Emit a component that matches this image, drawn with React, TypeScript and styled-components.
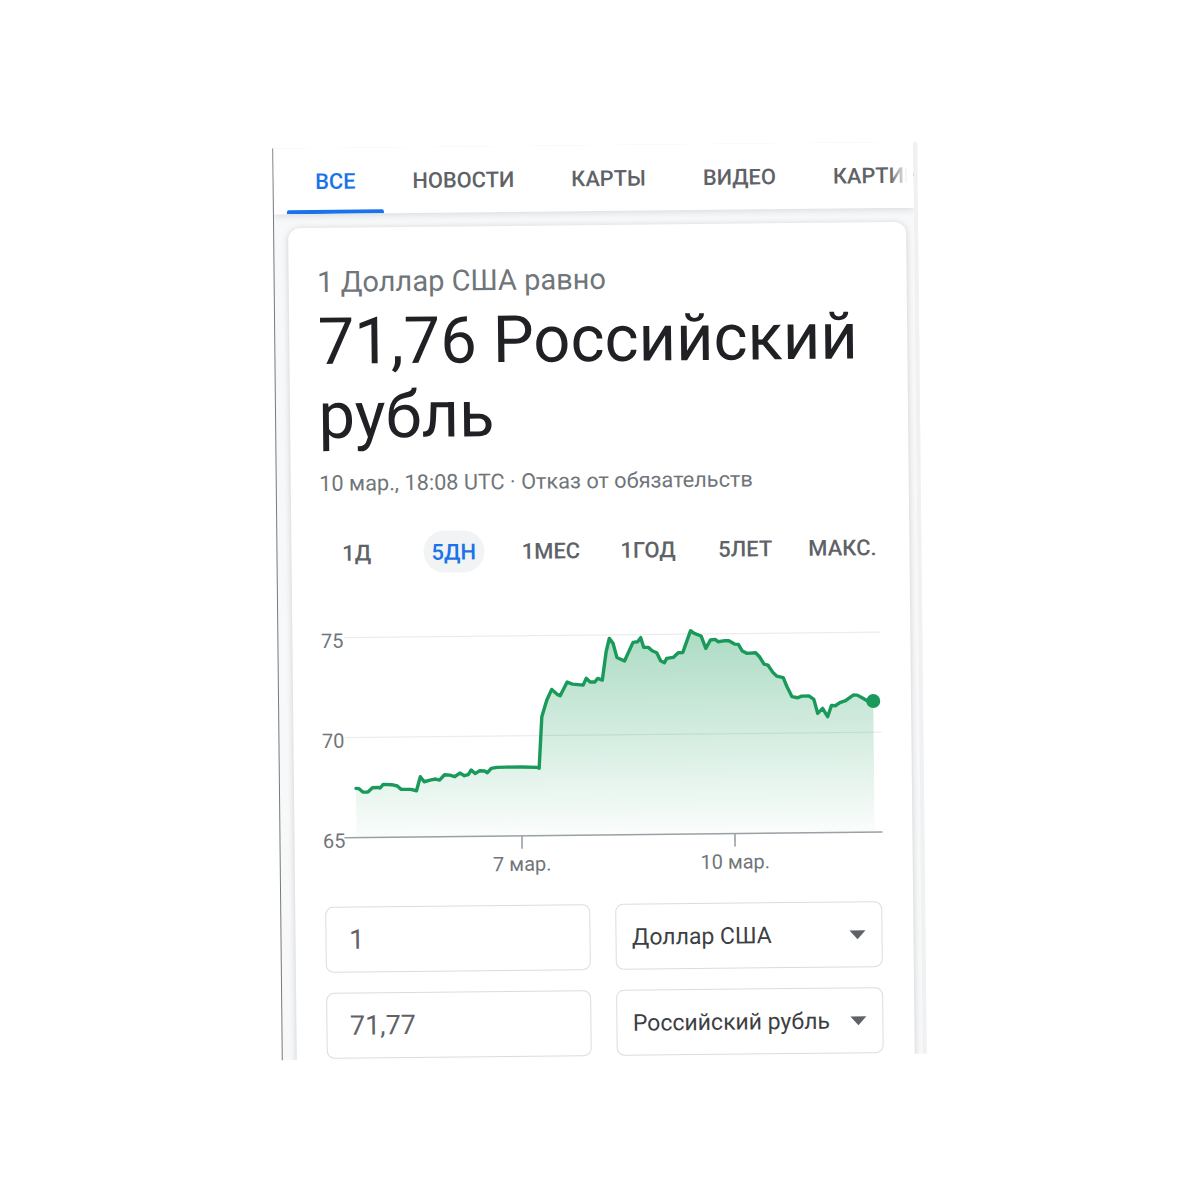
import React from "react";
import styled, { createGlobalStyle } from "styled-components";

const GlobalStyle = createGlobalStyle`
  html, body { margin: 0; padding: 0; background: #fff; }
  body { font-family: Roboto, "Noto Sans", Arial, sans-serif; }
`;

const Page = styled.div`
  padding: 145px 0 0 277px;
  height: 1200px;
  box-sizing: border-box;
  overflow: hidden;
`;

const Frame = styled.div`
  width: 645px;
  height: 912px;
  overflow: hidden;
  background: #f7f8f9;
  box-sizing: border-box;
  border-left: 1.5px solid #7a7a7a;
  border-right: 4px solid #f1f1f1;
  transform: rotate(-0.6deg);
  display: flex;
  flex-direction: column;
`;

const TabBar = styled.nav`
  position: relative;
  z-index: 1;
  flex: none;
  display: flex;
  height: 66px;
  padding-left: 13px;
  background: #fff;
  box-shadow: 0 2px 6px rgba(60, 64, 67, 0.15);
  overflow: hidden;
  white-space: nowrap;
  &::after {
    content: "";
    position: absolute;
    right: 0;
    top: 0;
    bottom: 0;
    width: 24px;
    background: linear-gradient(to right, rgba(255, 255, 255, 0), #fff 75%);
  }
`;

const Tab = styled.div<{ $active?: boolean }>`
  position: relative;
  flex: none;
  display: flex;
  align-items: center;
  padding: 0 28.5px;
  font-size: 21.8px;
  font-weight: 500;
  color: ${(p) => (p.$active ? "#1a73e8" : "#5f6368")};
  &::after {
    content: "";
    position: absolute;
    left: 0;
    right: 0;
    bottom: 0;
    height: 4px;
    border-radius: 2px 2px 0 0;
    background: ${(p) => (p.$active ? "#1a73e8" : "transparent")};
  }
`;

const Card = styled.section`
  flex: none;
  margin: 14px 0 0 13.5px;
  width: 618px;
  height: 880px;
  box-sizing: border-box;
  padding: 36px 30px 0 29px;
  background: #fff;
  border-radius: 12px;
  box-shadow: 0 1px 6px rgba(32, 33, 36, 0.2);
`;

const Equals = styled.div`
  font-size: 29px;
  line-height: 36px;
  color: #70757a;
`;

const Result = styled.div`
  margin-top: 5px;
  font-size: 65px;
  line-height: 74px;
  color: #202124;
`;

const Meta = styled.div`
  margin-top: 17px;
  font-size: 21.7px;
  line-height: 28px;
  color: #70757a;
`;

const RangeRow = styled.div`
  margin: 34px -12px 0 -12px;
  display: grid;
  grid-template-columns: repeat(6, 1fr);
  height: 42px;
`;

const RangeItem = styled.div<{ $active?: boolean }>`
  justify-self: center;
  display: flex;
  align-items: center;
  justify-content: center;
  height: 42px;
  min-width: 61px;
  padding: 0 4px;
  box-sizing: border-box;
  border-radius: 21px;
  font-size: 22px;
  font-weight: 500;
  color: ${(p) => (p.$active ? "#1a73e8" : "#5f6368")};
  background: ${(p) => (p.$active ? "#f1f3f4" : "transparent")};
`;

const ChartSvg = styled.svg`
  display: block;
  margin: 34px 0 0 -29px;
  font-family: Roboto, Arial, sans-serif;
`;

const ConvGrid = styled.div`
  margin-top: 14px;
  padding-left: 1px;
  display: grid;
  grid-template-columns: 265px 267px;
  column-gap: 25px;
  row-gap: 20px;
`;

const Field = styled.div<{ $select?: boolean }>`
  height: 66px;
  box-sizing: border-box;
  border: 1.5px solid #dadce0;
  border-radius: 8px;
  display: flex;
  align-items: center;
  justify-content: space-between;
  padding: 0 16px 0 ${(p) => (p.$select ? "16px" : "23px")};
  font-size: ${(p) => (p.$select ? "23px" : "27px")};
  color: ${(p) => (p.$select ? "#3c4043" : "#5f6368")};
`;

const Caret = styled.span`
  width: 0;
  height: 0;
  border-left: 8.5px solid transparent;
  border-right: 8.5px solid transparent;
  border-top: 9px solid #5f6368;
`;

// traced points (zoom-image coords of the reference)
const RAW: [number, number][] = [
  [147, 565], [155, 566], [165, 576], [178, 576], [190, 563], [205, 562], [210, 564], [218, 553],
  [240, 554], [255, 558], [265, 568], [290, 568], [305, 572], [315, 530], [325, 545], [340, 540],
  [355, 537], [365, 540], [378, 524], [392, 525], [405, 530], [418, 519], [430, 527], [440, 524],
  [448, 510], [458, 520], [470, 512], [483, 513], [490, 518], [500, 505], [515, 502], [540, 501],
  [580, 501], [620, 502], [625, 505], [632, 350], [645, 300], [658, 268], [672, 283], [680, 287],
  [698, 246], [712, 252], [740, 255], [748, 235], [758, 246], [770, 246], [778, 235], [790, 240],
  [800, 155], [808, 115], [818, 130], [828, 172], [848, 183], [858, 157], [870, 127], [882, 125],
  [890, 113], [898, 142], [910, 142], [920, 152], [932, 158], [942, 182], [952, 188], [958, 175],
  [975, 172], [988, 158], [1000, 157], [1010, 125], [1020, 92], [1030, 100], [1048, 108], [1060, 145],
  [1072, 120], [1085, 118], [1092, 125], [1110, 122], [1120, 122], [1135, 132], [1145, 133], [1155, 153],
  [1168, 160], [1190, 158], [1200, 170], [1212, 192], [1222, 195], [1235, 217], [1245, 228], [1262, 233],
  [1272, 260], [1285, 290], [1300, 293], [1310, 288], [1330, 288], [1342, 298], [1352, 340], [1365, 325],
  [1378, 350], [1388, 316], [1398, 317], [1410, 308], [1425, 302], [1432, 296], [1445, 285], [1455, 285],
  [1470, 295], [1490, 308], [1497, 303],
];

const PTS = RAW.map(([zx, zy]) => {
  const x = 356 + (zx - 147) / 2.61;
  const y = 600 + zy / 3;
  return [x - (y - 600) * 0.0105 - 292, y + (x - 595) * 0.0105 - 225] as [number, number];
});

const linePath = PTS.map(([x, y], i) => `${i ? "L" : "M"}${x.toFixed(1)} ${y.toFixed(1)}`).join(" ");
const last = PTS[PTS.length - 1];
const areaPath = `${linePath} L${last[0].toFixed(1)} 610 L${PTS[0][0].toFixed(1)} 610 Z`;

const GREEN = "#1a9a5a";

function Chart() {
  return (
    <ChartSvg width={618} height={285} viewBox="0 380 618 285">
      <defs>
        <linearGradient id="fillG" x1="0" y1="400" x2="0" y2="610" gradientUnits="userSpaceOnUse">
          <stop offset="0" stopColor="#1e9e5e" stopOpacity="0.38" />
          <stop offset="1" stopColor="#1e9e5e" stopOpacity="0.02" />
        </linearGradient>
      </defs>
      <line x1="52" y1="410" x2="588" y2="410" stroke="#ececec" strokeWidth="1.2" />
      <line x1="52" y1="510" x2="588" y2="510" stroke="#ececec" strokeWidth="1.2" />
      <path d={areaPath} fill="url(#fillG)" />
      <path d={linePath} fill="none" stroke={GREEN} strokeWidth="3.4" strokeLinejoin="round" strokeLinecap="round" />
      <circle cx={last[0]} cy={last[1]} r="7" fill={GREEN} />
      <line x1="50" y1="610" x2="588" y2="610" stroke="#9aa0a6" strokeWidth="1.6" />
      <line x1="227.5" y1="610" x2="227.5" y2="623" stroke="#9aa0a6" strokeWidth="1.6" />
      <line x1="440.5" y1="610" x2="440.5" y2="623" stroke="#9aa0a6" strokeWidth="1.6" />
      <g fontSize="20" fill="#70757a" textAnchor="end">
        <text x="51" y="420">75</text>
        <text x="51" y="520">70</text>
        <text x="51" y="620">65</text>
      </g>
      <g fontSize="20" fill="#70757a" textAnchor="middle">
        <text x="227.5" y="645">7 мар.</text>
        <text x="440.5" y="645">10 мар.</text>
      </g>
    </ChartSvg>
  );
}

const TABS = ["Все", "Новости", "Карты", "Видео", "Картинки"];
const RANGES = ["1Д", "5ДН", "1МЕС", "1ГОД", "5ЛЕТ", "МАКС."];

export default function App() {
  return (
    <>
      <GlobalStyle />
      <Page>
        <Frame>
          <TabBar>
            {TABS.map((t, i) => (
              <Tab key={t} $active={i === 0}>
                {t.toUpperCase()}
              </Tab>
            ))}
          </TabBar>
          <Card>
            <Equals>1 Доллар США равно</Equals>
            <Result>
              71,76 Российский
              <br />
              рубль
            </Result>
            <Meta>10 мар., 18:08 UTC · Отказ от обязательств</Meta>
            <RangeRow>
              {RANGES.map((r, i) => (
                <RangeItem key={r} $active={i === 1}>
                  {r}
                </RangeItem>
              ))}
            </RangeRow>
            <Chart />
            <ConvGrid>
              <Field>1</Field>
              <Field $select>
                Доллар США
                <Caret />
              </Field>
              <Field>71,77</Field>
              <Field $select>
                Российский рубль
                <Caret />
              </Field>
            </ConvGrid>
          </Card>
        </Frame>
      </Page>
    </>
  );
}
